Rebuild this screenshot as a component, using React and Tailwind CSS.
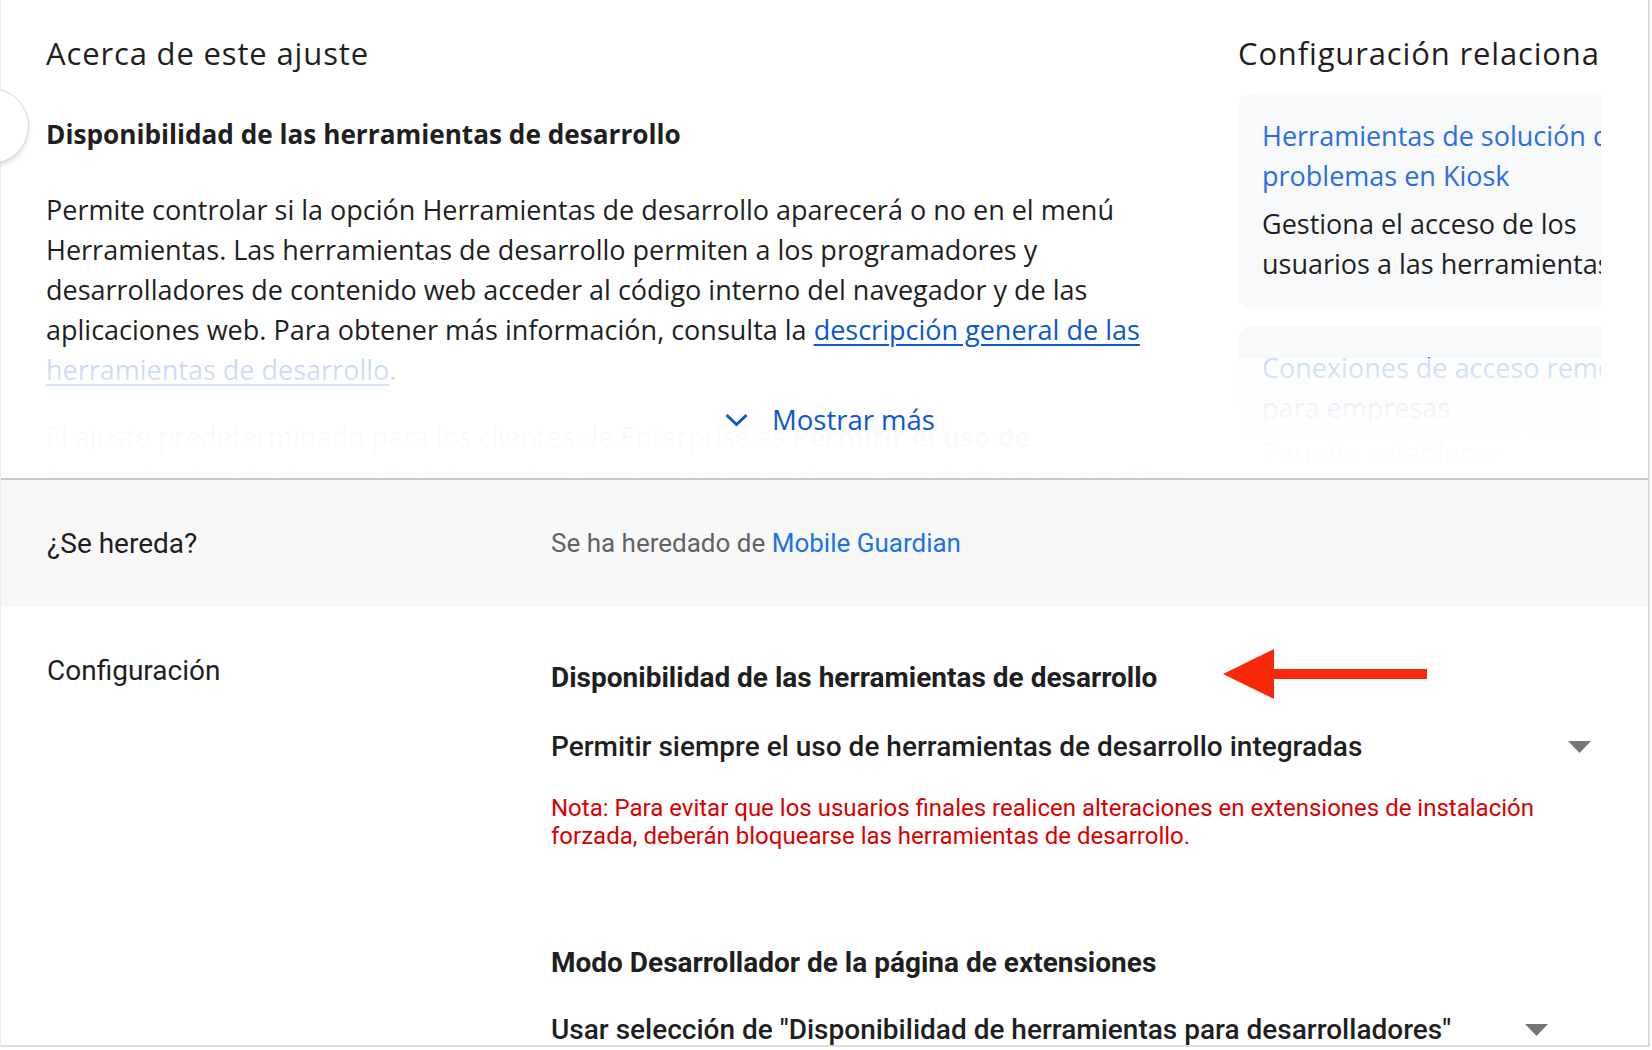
import React from 'react';

const gsans = { fontFamily: '"Open Sans", "Noto Sans", sans-serif' };

function Caret({ className }) {
    return (
        <svg className={className} width="23" height="12" viewBox="0 0 23 12">
            <polygon points="0,0 23,0 11.5,12" fill="#757575" />
        </svg>
    );
}

function RedArrow() {
    return (
        <svg width="204" height="50" viewBox="0 0 204 50" className="-mt-[13px] -mb-[5px]">
            <polygon points="0,25 51,0 51,50" fill="#f8290b" />
            <rect x="50" y="20" width="154" height="10" fill="#f8290b" />
        </svg>
    );
}

export default function App() {
    return (
        <div className="w-[1652px] h-[1050px] bg-white overflow-hidden font-['Roboto',sans-serif] text-[#1f1f1f]">
            <div className="relative w-[1650px] border-l border-l-[#ececec] border-r-2 border-r-[#dcdcdc] border-b-2 border-b-[#dcdcdc]">
                {/* boton circular a medio esconder */}
                <div className="absolute left-[-48px] top-[88px] w-[76px] h-[76px] rounded-full bg-white border border-[#d6d6d6] shadow-md z-10"></div>

                {/* Acerca de este ajuste */}
                <div className="relative h-[478px] overflow-hidden flex" style={gsans}>
                    <div className="ml-[45px] w-[1150px] pt-[35px] shrink-0">
                        <h2 className="text-[31px] leading-[36px] font-normal tracking-[0.85px]">Acerca de este ajuste</h2>
                        <h3 className="mt-[47px] text-[26.2px] leading-[32px] font-bold">Disponibilidad de las herramientas de desarrollo</h3>
                        <p className="mt-[40px] text-[27px] leading-[40px]">
                            Permite controlar si la opción Herramientas de desarrollo aparecerá o no en el menú Herramientas. Las herramientas de desarrollo permiten a los programadores y desarrolladores de contenido web acceder al código interno del navegador y de las aplicaciones web. Para obtener más información, consulta la{' '}
                            <a href="#" className="text-[#0b57d0] underline underline-offset-4">descripción general de las herramientas de desarrollo</a>.
                        </p>
                        <p className="mt-[27px] text-[27px] leading-[40px]">
                            El ajuste predeterminado para los clientes de Enterprise es <b>Permitir el uso de herramientas de desarrollo integradas</b>, excepto en extensiones instaladas por la política de empresa.
                        </p>
                    </div>
                    <div className="ml-[42px] w-[363px] shrink-0 overflow-hidden pt-[35px]">
                        <h2 className="text-[31px] leading-[36px] tracking-[0.85px] whitespace-nowrap">Configuración relacionada</h2>
                        <div className="mt-[22px] w-[430px] rounded-[14px] bg-[#f8f9fa] px-[24px] pt-[23px] pb-[25px]">
                            <a href="#" className="block text-[27px] leading-[40px] text-[#2a6ee6]">Herramientas de solución de problemas en Kiosk</a>
                            <p className="mt-[8px] text-[27px] leading-[40px]">Gestiona el acceso de los usuarios a las herramientas.</p>
                        </div>
                        <div className="mt-[17px] w-[430px] rounded-[14px] bg-[#f8f9fa] px-[24px] pt-[22px] pb-[25px]">
                            <a href="#" className="block text-[27px] leading-[40px] text-[#2a6ee6]">Conexiones de acceso remoto para empresas</a>
                            <p className="mt-[5px] text-[27px] leading-[40px]">Permite establecer conexiones remotas con los dispositivos.</p>
                        </div>
                    </div>

                    {/* degradado que oculta el resto */}
                    <div className="absolute left-0 right-0 top-[358px] bottom-0 bg-linear-to-b from-white/75 via-white/97 via-55% to-white"></div>

                    <button className="absolute top-[402px] left-1/2 ml-[5px] -translate-x-1/2 flex items-center gap-[24px] text-[#0b57d0] text-[27.5px] leading-[36px] font-medium">
                        <svg width="24" height="14" viewBox="0 0 24 14" fill="none">
                            <path d="M2 2 L12 11.5 L22 2" stroke="#0b57d0" strokeWidth="3" />
                        </svg>
                        Mostrar más
                    </button>
                </div>

                <div className="h-[2px] bg-[#c9c9c9]"></div>

                {/* ¿Se hereda? */}
                <div className="h-[127px] bg-[#f8f8f8] flex items-center">
                    <div className="ml-[46px] w-[504px] text-[28px]">¿Se hereda?</div>
                    <div className="text-[26px] text-[#5f6368]">
                        Se ha heredado de <a href="#" className="text-[#1a73e8]">Mobile Guardian</a>
                    </div>
                </div>

                {/* Configuración */}
                <div className="h-[438px] flex">
                    <div className="ml-[46px] w-[504px] pt-[48px] text-[28px] leading-[32px]">Configuración</div>
                    <div className="pt-[55px]">
                        <div className="flex items-center gap-[66px]">
                            <h4 className="text-[28px] leading-[32px] font-bold">Disponibilidad de las herramientas de desarrollo</h4>
                            <RedArrow />
                        </div>
                        <div className="mt-[37px] w-[1050px] flex items-center justify-between">
                            <span className="text-[28px] leading-[32px] font-medium">Permitir siempre el uso de herramientas de desarrollo integradas</span>
                            <Caret className="mr-[10px]" />
                        </div>
                        <p className="mt-[31px] w-[1020px] text-[24px] leading-[28px] text-[#d90000]">
                            Nota: Para evitar que los usuarios finales realicen alteraciones en extensiones de instalación forzada, deberán bloquearse las herramientas de desarrollo.
                        </p>
                        <h4 className="mt-[97px] text-[28px] leading-[32px] font-bold">Modo Desarrollador de la página de extensiones</h4>
                        <div className="mt-[35px] w-[1007px] flex items-center justify-between">
                            <span className="text-[28px] leading-[32px] font-medium">Usar selección de "Disponibilidad de herramientas para desarrolladores"</span>
                            <Caret className="mr-[10px]" />
                        </div>
                    </div>
                </div>
            </div>
        </div>
    );
}
